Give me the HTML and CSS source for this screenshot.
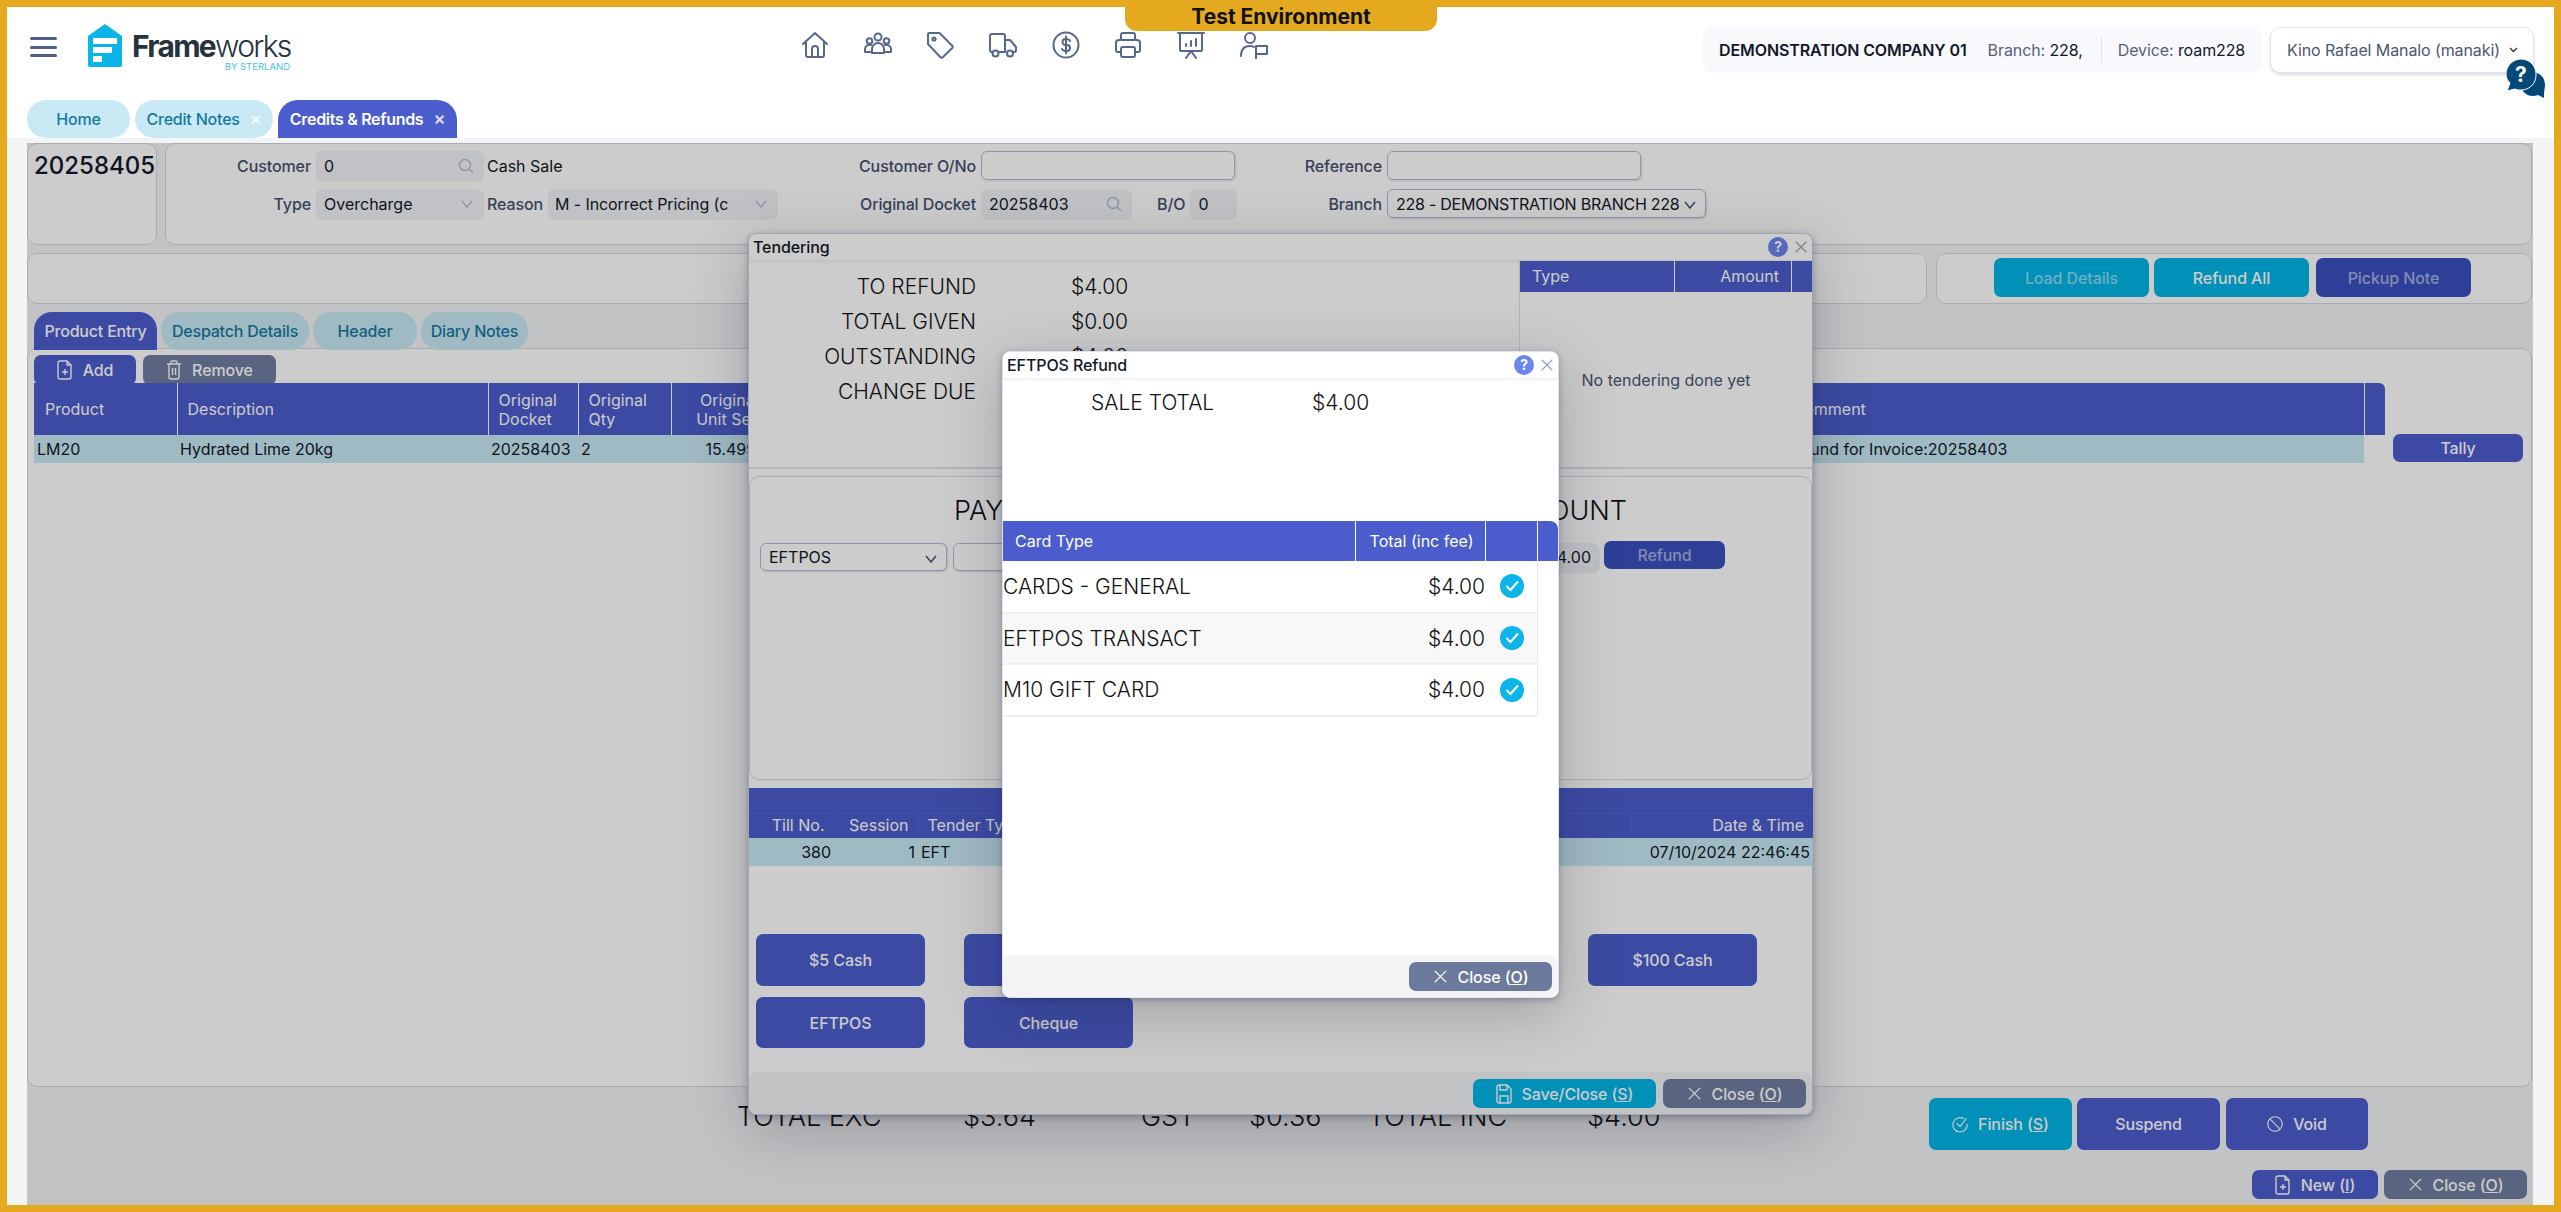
FILE: index.html
```html
<!DOCTYPE html>
<html lang="en">
<head>
  <meta charset="UTF-8" />
  <title>Frameworks - Credits &amp; Refunds</title>
  <link rel="stylesheet" href="styles.css">
</head>
<body>
  <svg class="defs" width="0" height="0">
    <symbol id="i-x" viewBox="0 0 16 16"><path d="M2 2l12 12M14 2L2 14" fill="none" stroke="currentColor" stroke-width="1.5"/></symbol>
    <symbol id="i-file" viewBox="0 0 16 20"><path d="M3 1h7l4 4v12a2 2 0 0 1-2 2H3a2 2 0 0 1-2-2V3a2 2 0 0 1 2-2zM10 1v4h4M8 9v6M5 12h6" fill="none" stroke="currentColor" stroke-width="1.4"/></symbol>
    <symbol id="i-trash" viewBox="0 0 16 20"><path d="M1 4h14M5 4V2a1 1 0 0 1 1-1h4a1 1 0 0 1 1 1v2M3 4v13a2 2 0 0 0 2 2h6a2 2 0 0 0 2-2V4M6.500 8v7M9.500 8v7" fill="none" stroke="currentColor" stroke-width="1.4"/></symbol>
    <symbol id="i-save" viewBox="0 0 16 20"><path d="M3 1h8l4 4v12a2 2 0 0 1-2 2H3a2 2 0 0 1-2-2V3a2 2 0 0 1 2-2zM4 1v5h7V1M4 19v-7h8v7" fill="none" stroke="currentColor" stroke-width="1.4"/></symbol>
    <symbol id="i-check" viewBox="0 0 20 20"><path d="M15 3.500A9 9 0 1 0 19 10M6 9l4 4 8-10" fill="none" stroke="currentColor" stroke-width="1.4"/></symbol>
    <symbol id="i-ban" viewBox="0 0 20 20"><circle cx="10" cy="10" r="9" fill="none" stroke="currentColor" stroke-width="1.4"/><path d="M4 4l12 12" stroke="currentColor" stroke-width="1.4"/></symbol>
  </svg>

  <div class="frame">
    <div class="env-badge">Test Environment</div>

    <header class="topbar">
      <button class="menu-btn" aria-label="Menu"><span></span><span></span><span></span></button>

      <div class="logo">
        <svg width="34" height="43" viewBox="0 0 34 43">
          <path d="M17 0L34 12V41a2 2 0 0 1-2 2H2a2 2 0 0 1-2-2V12z" fill="#0bb5e8"/>
          <path d="M5 14h24v6H5zM5 23h19v6H5zM5 32h9v6H5z" fill="#fff"/>
        </svg>
        <div class="logo-text">
          <div class="logo-name"><b>Frame</b>works</div>
          <div class="logo-sub">BY STERLAND</div>
        </div>
      </div>

      <nav class="nav-icons">
        <svg viewBox="0 0 28 28"><path d="M2 13L14 2l12 11M5 11v13a2 2 0 0 0 2 2h14a2 2 0 0 0 2-2V11M11 26v-8a3 3 0 0 1 6 0v8"/></svg>
        <svg viewBox="0 0 28 28"><circle cx="14" cy="6" r="3.500"/><circle cx="5.500" cy="10" r="2.800"/><circle cx="22.500" cy="10" r="2.800"/><path d="M8 22v-4a6 6 0 0 1 12 0v4zM8 21H1v-3a4.500 4.500 0 0 1 6-4M20 21h7v-3a4.500 4.500 0 0 0-6-4"/></svg>
        <svg viewBox="0 0 28 28"><path d="M3 3h10.500L26 15.500a2 2 0 0 1 0 2.800L17 27a2 2 0 0 1-2.800 0L2 14V4a1 1 0 0 1 1-1z" transform="translate(0 -1)"/><circle cx="8" cy="8" r="1.600"/></svg>
        <svg viewBox="0 0 28 28"><path d="M16 21H9M4 21H3a2 2 0 0 1-2-2V5a2 2 0 0 1 2-2h11a2 2 0 0 1 2 2v16M16 9h5l6 7v3a2 2 0 0 1-2 2h-1"/><circle cx="6.500" cy="22.500" r="3"/><circle cx="21" cy="22.500" r="3"/></svg>
        <svg viewBox="0 0 28 28"><circle cx="14" cy="14" r="12.500"/><path d="M18 10a3.500 3.500 0 0 0-3.500-2h-1a3 3 0 0 0 0 6h1.500a3 3 0 0 1 0 6h-2A3.500 3.500 0 0 1 10 18M14 5.500v17" stroke-width="2"/></svg>
        <svg viewBox="0 0 28 28"><path d="M7 9V4a2 2 0 0 1 2-2h10a2 2 0 0 1 2 2v5M7 21H4a2 2 0 0 1-2-2v-7a3 3 0 0 1 3-3h18a3 3 0 0 1 3 3v7a2 2 0 0 1-2 2h-3"/><rect x="7" y="16" width="14" height="10" rx="2"/></svg>
        <svg viewBox="0 0 28 28"><path d="M1 2h26M3 2v17a1 1 0 0 0 1 1h20a1 1 0 0 0 1-1V2M9 27l5-7 5 7M9 15v-2M14 15v-5M19 15V8"/></svg>
        <svg viewBox="0 0 28 28"><circle cx="10" cy="7" r="5"/><path d="M1 25c0-7 3-10 9-10 1.500 0 3 .3 4 1M16 28V15h11v8H16"/></svg>
      </nav>

      <div class="user-area">
        <div class="company-box">
          <strong>DEMONSTRATION COMPANY 01</strong>
          <span class="meta">Branch: <em>228,</em></span>
          <span class="divider"></span>
          <span class="meta">Device: <em>roam228</em></span>
        </div>
        <div class="user-box">Kino Rafael Manalo (manaki)<svg width="9" height="6" viewBox="0 0 9 6"><path d="M1 1l3.500 3.500L8 1" fill="none" stroke="#333" stroke-width="1.300"/></svg></div>
      </div>

      <svg class="help-bubble" width="40" height="40" viewBox="0 0 40 40">
        <path d="M26 13c7 0 13 5 13 13 0 3-1 6-1 9v4l-6-3c-9 3-16-2-17-9z" fill="#02497a"/>
        <path d="M15 0a15 15 0 0 1 15 16c0 9-7 15-15 15-2 0-4 0-6-1l-8 2 3-8C1 21 0 18 0 15 0 7 7 0 15 0z" fill="#02497a" stroke="#fff" stroke-width="1"/>
        <text x="15" y="23" text-anchor="middle" class="help-mark">?</text>
      </svg>
    </header>

    <div class="page-tabs">
      <div class="page-tab home">Home</div>
      <div class="page-tab">Credit Notes <span class="tab-x">×</span></div>
      <div class="page-tab active">Credits &amp; Refunds <span class="tab-x">×</span></div>
    </div>

    <main class="main">
      <section class="row-top">
        <div class="panel docket-panel">20258405</div>
        <div class="panel form-panel">
          <label class="lbl">Customer</label>
          <div class="field off">0<svg class="search" viewBox="0 0 16 16"><circle cx="7" cy="7" r="5.500"/><path d="M11 11l4 4"/></svg></div>
          <div class="plain">Cash Sale</div>
          <label class="lbl">Customer O/No</label>
          <div class="field on"></div>
          <label class="lbl">Reference</label>
          <div class="ref-wrap"><div class="field on"></div></div>

          <label class="lbl">Type</label>
          <div class="field off">Overcharge<svg class="chev" viewBox="0 0 12 8"><path d="M1 1l5 6 5-6"/></svg></div>
          <div class="reason-wrap">
            <label class="lbl">Reason</label>
            <div class="field off reason">M - Incorrect Pricing (c<svg class="chev" viewBox="0 0 12 8"><path d="M1 1l5 6 5-6"/></svg></div>
          </div>
          <label class="lbl">Original Docket</label>
          <div class="docket-wrap">
            <div class="field off docket">20258403<svg class="search" viewBox="0 0 16 16"><circle cx="7" cy="7" r="5.500"/><path d="M11 11l4 4"/></svg></div>
            <label class="lbl">B/O</label>
            <div class="field off bo">0</div>
          </div>
          <label class="lbl">Branch</label>
          <div class="field on select">228 - DEMONSTRATION BRANCH 228<svg class="chev dark" viewBox="0 0 12 8"><path d="M1 1l5 6 5-6"/></svg></div>
        </div>
      </section>

      <section class="row-actions">
        <div class="panel grow"></div>
        <div class="panel action-panel">
          <button class="btn teal faded">Load Details</button>
          <button class="btn teal">Refund All</button>
          <button class="btn navy faded">Pickup Note</button>
        </div>
      </section>

      <section class="inner-tabs">
        <div class="inner-tab active">Product Entry</div>
        <div class="inner-tab">Despatch Details</div>
        <div class="inner-tab">Header</div>
        <div class="inner-tab">Diary Notes</div>
      </section>

      <section class="panel product-panel">
        <div class="tool-row">
          <button class="btn blue small add"><svg><use href="#i-file"/></svg>Add</button>
          <button class="btn slate small remove"><svg><use href="#i-trash"/></svg>Remove</button>
        </div>
        <div class="table-row">
          <table class="grid products">
            <colgroup><col class="c143"><col class="c311"><col class="c90"><col class="c93"><col class="c98"><col class="c1013"><col class="c582"><col class="c21"></colgroup>
            <thead>
              <tr><th>Product</th><th>Description</th><th>Original<br>Docket</th><th>Original<br>Qty</th><th class="r">Original<br>Unit Sell</th><th></th><th>Comment</th><th></th></tr>
            </thead>
            <tbody>
              <tr><td>LM20</td><td>Hydrated Lime 20kg</td><td>20258403</td><td>2</td><td class="r">15.4999</td><td></td><td>Refund for Invoice:20258403</td><td class="blank"></td></tr>
            </tbody>
          </table>
          <button class="btn blue tally">Tally</button>
        </div>
      </section>

      <section class="summary">
        <div class="totals">
          <span>TOTAL EXC</span><span>$3.64</span><span>GST</span><span>$0.36</span><span>TOTAL INC</span><span>$4.00</span>
        </div>
        <button class="btn teal big"><svg><use href="#i-check"/></svg><span>Finish (<u>S</u>)</span></button>
        <button class="btn blue big">Suspend</button>
        <button class="btn blue big void"><svg><use href="#i-ban"/></svg>Void</button>
      </section>

      <section class="bottom-row">
        <button class="btn blue small new"><svg><use href="#i-file"/></svg><span>New (<u>I</u>)</span></button>
        <button class="btn slate small close"><svg class="x"><use href="#i-x"/></svg><span>Close (<u>O</u>)</span></button>
      </section>

      <!-- tendering window, sits under the dim layer -->
      <div class="window tender">
        <div class="win-title">Tendering<span class="win-tools"><span class="help-dot">?</span><svg class="win-x"><use href="#i-x"/></svg></span></div>
        <div class="tender-top">
          <div class="stats">
            <span>TO REFUND</span><span>$4.00</span>
            <span>TOTAL GIVEN</span><span>$0.00</span>
            <span>OUTSTANDING</span><span>$4.00</span>
            <span>CHANGE DUE</span><span>$0.00</span>
          </div>
          <div class="tender-list">
            <div class="list-head"><span class="t">Type</span><span class="a">Amount</span><span class="e"></span></div>
            <div class="list-empty">No tendering done yet</div>
          </div>
        </div>
        <div class="panel pay-panel">
          <div class="pay-heads"><span>PAYMENT TYPE</span><span>AMOUNT</span></div>
          <div class="pay-row">
            <div class="field on pay-select">EFTPOS<svg class="chev dark" viewBox="0 0 12 8"><path d="M1 1l5 6 5-6"/></svg></div>
            <div class="field on pay-ref"></div>
            <div class="field off pay-amount">$4.00</div>
            <button class="btn navy faded refund">Refund</button>
          </div>
        </div>
        <table class="grid tenders">
          <colgroup><col class="c85"><col class="c84"><col class="c713"><col class="c182"></colgroup>
          <thead>
            <tr class="spacer"><th colspan="4"></th></tr>
            <tr><th class="r">Till No.</th><th class="r">Session</th><th>Tender Type</th><th class="r">Date &amp; Time</th></tr>
          </thead>
          <tbody>
            <tr><td class="r">380</td><td class="r">1</td><td>EFT</td><td class="r">07/10/2024 22:46:45</td></tr>
          </tbody>
        </table>
        <div class="quick-grid">
          <button class="btn blue">$5 Cash</button>
          <button class="btn blue">$10 Cash</button>
          <button class="btn blue">$20 Cash</button>
          <button class="btn blue">$50 Cash</button>
          <button class="btn blue">$100 Cash</button>
          <button class="btn blue">EFTPOS</button>
          <button class="btn blue">Cheque</button>
        </div>
        <div class="win-foot">
          <button class="btn teal small save"><svg><use href="#i-save"/></svg><span>Save/Close (<u>S</u>)</span></button>
          <button class="btn slate small close"><svg class="x"><use href="#i-x"/></svg><span>Close (<u>O</u>)</span></button>
        </div>
      </div>

      <div class="dim"></div>

      <div class="window refund-win">
        <div class="win-title">EFTPOS Refund<span class="win-tools"><span class="help-dot">?</span><svg class="win-x"><use href="#i-x"/></svg></span></div>
        <div class="sale-total"><span>SALE TOTAL</span><span>$4.00</span></div>
        <table class="card-table">
          <colgroup><col class="c352"><col class="c130"><col class="c52"><col class="c21"></colgroup>
          <thead><tr><th>Card Type</th><th class="r">Total (inc fee)</th><th></th><th></th></tr></thead>
          <tbody>
            <tr><td>CARDS - GENERAL</td><td class="r">$4.00</td><td><span class="tick"><svg viewBox="0 0 24 24"><path d="M7 12.500l3.500 3.500L17.500 8"/></svg></span></td><td class="blank"></td></tr>
            <tr class="alt"><td>EFTPOS TRANSACT</td><td class="r">$4.00</td><td><span class="tick"><svg viewBox="0 0 24 24"><path d="M7 12.500l3.500 3.500L17.500 8"/></svg></span></td><td class="blank"></td></tr>
            <tr><td>M10 GIFT CARD</td><td class="r">$4.00</td><td><span class="tick"><svg viewBox="0 0 24 24"><path d="M7 12.500l3.500 3.500L17.500 8"/></svg></span></td><td class="blank"></td></tr>
          </tbody>
        </table>
        <div class="win-foot light">
          <button class="btn slate-lit small close"><svg class="x"><use href="#i-x"/></svg><span>Close (<u>O</u>)</span></button>
        </div>
      </div>
    </main>
  </div>
</body>
</html>
```

FILE: styles.css
```css
* {
  box-sizing: border-box;
}

body {
  margin: 0;
  font-family: "Inter", "Liberation Sans", sans-serif;
  font-size: 16px;
  color: #111827;
  overflow: hidden;
}

.defs {
  position: absolute;
}

.frame {
  position: relative;
  width: 2561px;
  height: 1212px;
  border: 7px solid #e4a91e;
  display: flex;
  flex-direction: column;
  background: #fff;
}

.env-badge {
  position: absolute;
  top: -1px;
  left: 1118px;
  width: 312px;
  height: 25px;
  background: #e4a91e;
  border-radius: 0 0 12px 12px;
  text-align: center;
  font-weight: 700;
  font-size: 21px;
  line-height: 21px;
  color: #111;
}

/* header */
.topbar {
  position: relative;
  height: 93px;
  display: flex;
  align-items: flex-start;
  padding: 20px 20px 0 23px;
}

.menu-btn {
  width: 27px;
  height: 20px;
  margin-top: 10px;
  padding: 0;
  border: 0;
  background: none;
  display: flex;
  flex-direction: column;
  justify-content: space-between;
}

.menu-btn span {
  height: 3px;
  border-radius: 2px;
  background: #4f5f85;
}

.logo {
  display: flex;
  gap: 10px;
  margin: -3px 0 0 31px;
}

.logo-text {
  width: 158px;
  padding-top: 9px;
}

.logo-name {
  font-size: 30px;
  line-height: 27px;
  letter-spacing: -1.7px;
  font-weight: 300;
  color: #25333f;
  white-space: nowrap;
}

.logo-name b {
  font-weight: 700;
}

.logo-sub {
  text-align: right;
  font-size: 9.500px;
  line-height: 10px;
  margin-top: 2px;
  color: #45c2ea;
}

.nav-icons {
  display: flex;
  gap: 34.700px;
  margin: 4px 0 0 511px;
}

.nav-icons svg {
  width: 28px;
  height: 28px;
  fill: none;
  stroke: #56678f;
  stroke-width: 2;
  stroke-linejoin: round;
  stroke-linecap: round;
}

.user-area {
  display: flex;
  gap: 8px;
  margin-left: auto;
}

.company-box {
  width: 559px;
  height: 46px;
  background: #f8f9fc;
  border-radius: 10px;
  display: flex;
  align-items: center;
  padding-left: 16px;
}

.company-box strong {
  font-weight: 600;
  letter-spacing: -0.1px;
  color: #111827;
  margin-right: 21px;
}

.meta {
  color: #56627d;
  letter-spacing: -0.1px;
  white-space: nowrap;
}

.meta em {
  font-style: normal;
  color: #111827;
}

.divider {
  width: 1px;
  height: 26px;
  background: #dde0e8;
  margin: 0 16px 0 18px;
}

.user-box {
  width: 264px;
  height: 46px;
  background: #fff;
  border: 1px solid #dfe3ee;
  border-radius: 10px;
  box-shadow: 0 2px 3px rgba(80, 90, 140, 0.2);
  display: flex;
  align-items: center;
  gap: 9px;
  padding-left: 16px;
  letter-spacing: -0.1px;
  color: #4b5672;
  white-space: nowrap;
}

.help-bubble {
  position: absolute;
  left: 2499px;
  top: 52px;
}

.help-mark {
  font-family: "Inter", sans-serif;
  font-size: 21px;
  font-weight: 700;
  fill: #fff;
}

.page-tabs {
  height: 38px;
  display: flex;
  gap: 5px;
  padding-left: 20px;
}

.page-tab {
  display: flex;
  align-items: center;
  justify-content: center;
  gap: 10px;
  width: 138px;
  background: #c9e9f4;
  color: #16799f;
  border-radius: 20px;
  font-weight: 500;
  letter-spacing: -0.2px;
  white-space: nowrap;
}

.page-tab.home {
  width: 103px;
}

.page-tab.active {
  width: 179px;
  background: #4b5dcc;
  color: #fff;
  font-weight: 600;
  letter-spacing: -0.3px;
  border-radius: 20px 20px 0 0;
}

.tab-x {
  font-size: 18px;
  line-height: 1;
  opacity: 0.8;
}

.page-tab:not(.active) .tab-x {
  color: #fff;
}

/* main page */
.main {
  position: relative;
  flex: 1;
  display: flex;
  flex-direction: column;
  background: #f3f4f6;
  padding: 5px 22px 0 20px;
}

.panel {
  background: #fff;
  border: 1px solid #d4d7de;
  border-radius: 10px;
}

.row-top {
  display: flex;
  gap: 8px;
  height: 102px;
}

.docket-panel {
  width: 130px;
  padding: 8px 0 0 6px;
  font-size: 24px;
  font-weight: 500;
  line-height: 28px;
}

.form-panel {
  flex: 1;
  display: grid;
  grid-template-columns: 145px 166px 289px 195px 254px 142px 319px;
  grid-template-rows: 29px 29px;
  gap: 9px 5px;
  align-content: start;
  padding-top: 7px;
}

.lbl {
  justify-self: end;
  align-self: center;
  font-weight: 500;
  letter-spacing: -0.1px;
  color: #45516f;
  white-space: nowrap;
}

.field {
  position: relative;
  display: flex;
  align-items: center;
  height: 29px;
  padding-left: 8px;
  border-radius: 6px;
  color: #111827;
  white-space: nowrap;
}

.field.off {
  background: #f1f3f7;
  box-shadow: 1px 1px 2px rgba(80, 90, 140, 0.15);
}

.field.on {
  background: #fff;
  border: 1px solid #b3bcd6;
  box-shadow: 1px 1px 2px rgba(80, 90, 140, 0.2);
}

.select {
  letter-spacing: -0.25px;
}

.search,
.chev {
  position: absolute;
  fill: none;
  stroke: #b6bed4;
  stroke-width: 1.500;
}

.search {
  right: 8px;
  top: 7px;
  width: 16px;
  height: 16px;
}

.chev {
  right: 9px;
  top: 11px;
  width: 12px;
  height: 8px;
}

.chev.dark {
  stroke: #465372;
}

.plain {
  align-self: center;
}

.ref-wrap .field {
  width: 254px;
}

.reason-wrap,
.docket-wrap {
  display: flex;
  gap: 5px;
}

.reason {
  width: 230px;
  padding-left: 7px;
  letter-spacing: -0.1px;
}

.docket {
  width: 149px;
}

.docket + .lbl {
  margin-left: 22px;
}

.bo {
  flex: 1;
}

.row-actions {
  display: flex;
  gap: 9px;
  height: 51px;
  margin-top: 8px;
}

.grow {
  flex: 1;
}

.action-panel {
  width: 596px;
  display: flex;
  gap: 5px;
  padding: 4px 0 0 57px;
}

.action-panel .btn {
  width: 155px;
  height: 39px;
}

.action-panel .navy {
  margin-left: 2px;
}

/* buttons */
.btn {
  display: inline-flex;
  align-items: center;
  justify-content: center;
  gap: 10px;
  border: 0;
  border-radius: 7px;
  padding: 0;
  color: #fff;
  font-family: inherit;
  font-size: 16px;
  font-weight: 500;
  letter-spacing: -0.1px;
  white-space: nowrap;
}

.btn svg {
  width: 16px;
  height: 20px;
  fill: none;
}

.btn svg.x {
  width: 15px;
  height: 15px;
}

.teal {
  background: #02b4e6;
}

.blue {
  background: #4b5dcc;
}

.navy {
  background: #3a4fbf;
}

.slate {
  background: #6f7ea0;
}

.slate-lit {
  background: #6b7a9c;
}

.faded {
  color: rgba(255, 255, 255, 0.55);
}

.small {
  height: 29px;
}

/* inner tabs and product grid */
.inner-tabs {
  display: flex;
  gap: 4px;
  height: 38px;
  margin-top: 8px;
  padding-left: 7px;
  position: relative;
}

.inner-tab {
  display: flex;
  align-items: center;
  justify-content: center;
  width: 148px;
  background: #c9e9f4;
  color: #16799f;
  border-radius: 18px;
  font-weight: 500;
  letter-spacing: -0.2px;
  padding-bottom: 1px;
}

.inner-tab:nth-child(3) {
  width: 104px;
}

.inner-tab:nth-child(4) {
  width: 107px;
}

.inner-tab.active {
  width: 123px;
  background: #4b5dcc;
  color: #fff;
  border-radius: 18px 18px 0 0;
}

.product-panel {
  margin-top: -2px;
  height: 739px;
  padding: 6px 0 0 6px;
}

.tool-row {
  display: flex;
  gap: 7px;
  height: 28px;
}

.add {
  width: 102px;
  height: 30px;
}

.remove {
  width: 133px;
  height: 30px;
}

.table-row {
  display: flex;
  gap: 8px;
}

.grid {
  border-collapse: collapse;
  table-layout: fixed;
}

.grid th {
  background: #4b5dcc;
  color: #fff;
  font-weight: 400;
  text-align: left;
  line-height: 19px;
  padding: 1px 10px 0;
  border-left: 1px solid #fff;
  white-space: nowrap;
  overflow: hidden;
}

.grid th:first-child {
  border-left: 0;
}

.grid td {
  background: #c9e9f4;
  height: 28px;
  padding: 0 3px;
  white-space: nowrap;
  overflow: hidden;
}

.grid .r {
  text-align: right;
}

.grid td.blank {
  background: none;
}

.products {
  width: 2351px;
}

.products thead tr {
  height: 52px;
}

.products th:first-child {
  padding-left: 11px;
}

.products th:last-child {
  border-radius: 0 6px 0 0;
}

.c143 { width: 143px; }
.c311 { width: 311px; }
.c90 { width: 90px; }
.c93 { width: 93px; }
.c98 { width: 98px; }
.c1013 { width: 1013px; }
.c582 { width: 582px; }
.c21 { width: 21px; }
.c85 { width: 85px; }
.c84 { width: 84px; }
.c713 { width: 713px; }
.c182 { width: 182px; }
.c352 { width: 352px; }
.c130 { width: 130px; }
.c52 { width: 52px; }

.tally {
  width: 130px;
  height: 28px;
  margin-top: 51px;
}

.summary {
  display: flex;
  gap: 5px;
  align-items: flex-start;
  padding-top: 11px;
  height: 63px;
}

.totals {
  display: grid;
  grid-template-columns: 226px 178px 108px 119px 219px 337px;
  margin-left: 710px;
  margin-top: 3px;
  font-size: 27px;
  font-weight: 300;
  line-height: 32px;
  color: #111;
}

.big {
  width: 143px;
  height: 52px;
}

.void {
  width: 142px;
  margin-left: 1px;
}

.bottom-row {
  display: flex;
  justify-content: flex-end;
  gap: 6px;
  padding: 20px 5px 0 0;
}

.new {
  width: 126px;
}

.close {
  width: 143px;
}

/* windows */
.window {
  position: absolute;
  display: flex;
  flex-direction: column;
  background: #fff;
  border: 1px solid #c9cfe0;
  border-radius: 8px;
  box-shadow: 0 15px 60px rgba(30, 35, 60, 0.25), 0 2px 6px rgba(30, 35, 60, 0.3);
}

.tender {
  left: 741px;
  top: 95px;
  width: 1065px;
  height: 882px;
}

.win-title {
  display: flex;
  align-items: center;
  height: 27px;
  padding-left: 4px;
  font-weight: 500;
  letter-spacing: -0.1px;
  border-bottom: 1px solid #eceef3;
  box-shadow: 0 2px 3px rgba(80, 90, 140, 0.06);
  flex-shrink: 0;
}

.win-tools {
  margin-left: auto;
  display: flex;
  align-items: center;
  gap: 6px;
  padding-right: 4px;
}

.help-dot {
  width: 20px;
  height: 20px;
  border-radius: 50%;
  background: #6b84ee;
  color: #fff;
  text-align: center;
  font-size: 14px;
  line-height: 20px;
  font-weight: 700;
}

.win-x {
  width: 14px;
  height: 14px;
  color: #9aa3b5;
}

.tender-top {
  display: flex;
  height: 208px;
  border-bottom: 2px solid #dfe2ea;
  flex-shrink: 0;
}

.stats {
  width: 770px;
  display: grid;
  grid-template-columns: 227px 1fr;
  grid-auto-rows: 35px;
  column-gap: 95px;
  padding-top: 8px;
  font-size: 21px;
  font-weight: 300;
  line-height: 35px;
  color: #111;
}

.stats span:nth-child(odd) {
  text-align: right;
}

.tender-list {
  flex: 1;
  display: flex;
  flex-direction: column;
  border-left: 1px solid #dfe2ea;
}

.list-head {
  display: flex;
  height: 31px;
  background: #4b5dcc;
  color: #fff;
  line-height: 31px;
}

.list-head .t {
  width: 155px;
  padding-left: 12px;
  border-right: 1px solid #fff;
}

.list-head .a {
  width: 117px;
  padding-right: 12px;
  text-align: right;
  border-right: 1px solid #fff;
}

.list-empty {
  text-align: center;
  margin-top: 78px;
  color: #4b5672;
}

.pay-panel {
  height: 304px;
  margin-top: 7px;
  flex-shrink: 0;
}

.pay-heads {
  display: flex;
  justify-content: space-between;
  padding: 16px 184px 0 204px;
  font-size: 27px;
  font-weight: 300;
  line-height: 36px;
  color: #111;
}

.pay-row {
  display: flex;
  align-items: flex-start;
  gap: 6px;
  margin-top: 14px;
  padding-left: 10px;
}

.pay-row .field {
  height: 28px;
}

.pay-select {
  width: 187px;
}

.pay-ref {
  width: 150px;
}

.pay-amount {
  width: 164px;
  margin-left: 325px;
  padding-right: 7px;
  justify-content: flex-end;
}

.refund {
  width: 121px;
  height: 28px;
  margin-top: -2px;
}

.tenders {
  width: 1064px;
  margin-top: 8px;
  flex-shrink: 0;
}

.tenders .spacer th {
  height: 25px;
  border-left: 0;
  border-bottom: 1px solid #5566d2;
}

.tenders th {
  height: 25px;
  padding: 0 9px;
  border-left: 1px solid #5566d2;
}

.quick-grid {
  display: grid;
  grid-template-columns: repeat(5, 169px);
  grid-template-rows: 52px 51px;
  column-gap: 39px;
  row-gap: 11px;
  padding: 68px 0 0 7px;
}

.win-foot {
  margin-top: auto;
  height: 42px;
  display: flex;
  justify-content: flex-end;
  gap: 7px;
  padding: 7px 6px 0 0;
  background: #f3f4f6;
  border-radius: 8px;
}

.save {
  width: 183px;
}

.dim {
  position: absolute;
  left: 20px;
  right: 21px;
  top: 5px;
  bottom: 0;
  background: rgba(0, 0, 0, 0.2);
}

.refund-win {
  left: 995px;
  top: 213px;
  width: 557px;
  height: 647px;
  border-color: #dfe3ee;
}

.sale-total {
  display: grid;
  grid-template-columns: 221px 1fr;
  height: 142px;
  padding: 10px 0 0 88px;
  font-size: 21px;
  font-weight: 300;
  line-height: 28px;
  color: #111;
}

.card-table {
  width: 555px;
  border-collapse: collapse;
  table-layout: fixed;
}

.card-table th {
  height: 40px;
  background: #4b5dcc;
  color: #fff;
  font-weight: 400;
  text-align: left;
  padding: 0 12px;
  border-left: 1px solid #fff;
  white-space: nowrap;
}

.card-table th:first-child {
  border-left: 0;
}

.card-table th.r {
  padding-right: 11px;
  text-align: right;
}

.card-table th:last-child {
  border-radius: 0 8px 0 0;
}

.card-table td {
  height: 51.500px;
  padding: 0;
  font-size: 21px;
  font-weight: 300;
  color: #111;
  border-bottom: 2px solid #eef0f4;
  white-space: nowrap;
}

.card-table td.r {
  text-align: right;
}

.card-table td:nth-child(3) {
  border-right: 1px solid #e3e6ee;
}

.card-table td.blank {
  border-bottom: 0;
}

.card-table .alt td:not(.blank) {
  background: #f8f8f8;
}

.tick {
  display: block;
  width: 24px;
  height: 24px;
  margin-left: 15px;
  border-radius: 50%;
  background: #0db6e8;
}

.tick svg {
  display: block;
  fill: none;
  stroke: #fff;
  stroke-width: 2;
  stroke-linecap: round;
}
```
